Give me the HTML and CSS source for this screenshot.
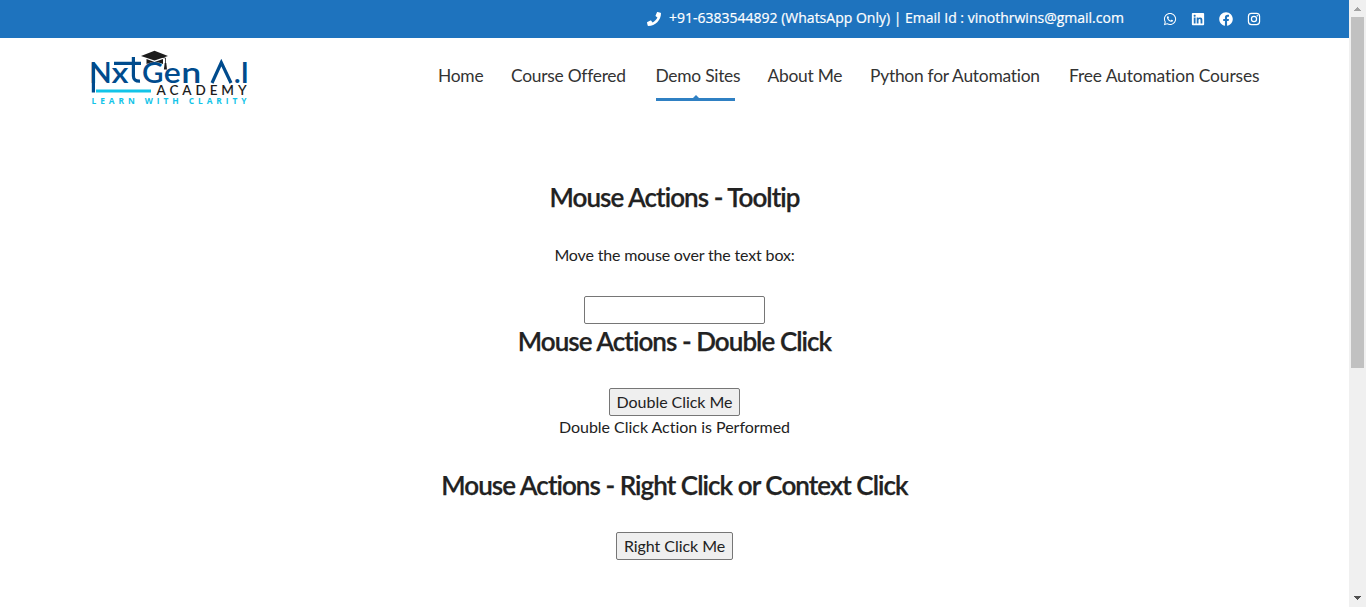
FILE: index.html
```html
<!DOCTYPE html>
<html lang="en">
<head>
<meta charset="utf-8">
<title>Mouse Actions - NxtGen A.I Academy</title>
<link rel="stylesheet" href="styles.css">
</head>
<body>
<div class="page">
  <div class="site">
    <div class="topbar">
      <svg class="phone" viewBox="0 0 512 512"><path d="M493.4 24.6l-104-24c-11.3-2.6-22.9 3.3-27.5 13.9l-48 112c-4.2 9.8-1.4 21.3 6.9 28l60.6 49.6c-36 76.7-98.9 140.5-177.2 177.2l-49.6-60.6c-6.8-8.3-18.2-11.1-28-6.9l-112 48C3.9 366.5-2 378.1.6 389.4l24 104C27.1 504.2 36.7 512 48 512c256.1 0 464-207.5 464-464 0-11.2-7.7-20.9-18.6-23.4z"/></svg>
      <span class="contact">+91-6383544892 (WhatsApp Only) | Email Id : vinothrwins@gmail.com</span>
      <div class="social">
        <svg viewBox="-32 0 512 512"><path d="M380.9 97.1C339 55.1 283.2 32 223.9 32c-122.4 0-222 99.6-222 222 0 39.1 10.2 77.3 29.6 111L0 480l117.7-30.9c32.4 17.7 68.9 27 106.1 27h.1c122.3 0 224.1-99.6 224.1-222 0-59.3-25.2-115-67.1-157zm-157 341.6c-33.2 0-65.7-8.9-94-25.7l-6.7-4-69.8 18.3L72 359.2l-4.4-7c-18.5-29.4-28.2-63.3-28.2-98.2 0-101.7 82.8-184.5 184.6-184.5 49.3 0 95.6 19.2 130.4 54.1 34.8 34.9 56.2 81.2 56.1 130.5 0 101.8-84.9 184.6-186.6 184.6zm101.2-138.2c-5.5-2.8-32.8-16.2-37.9-18-5.1-1.9-8.8-2.8-12.5 2.8-3.7 5.6-14.3 18-17.6 21.8-3.2 3.7-6.5 4.2-12 1.4-32.6-16.3-54-29.1-75.5-66-5.7-9.8 5.7-9.1 16.3-30.3 1.8-3.7.9-6.9-.5-9.7-1.4-2.8-12.5-30.1-17.1-41.2-4.5-10.8-9.1-9.3-12.5-9.5-3.2-.2-6.9-.2-10.6-.2-3.7 0-9.7 1.4-14.8 6.9-5.1 5.6-19.4 19-19.4 46.3 0 27.3 19.9 53.7 22.6 57.4 2.8 3.7 39.1 59.7 94.8 83.8 35.2 15.2 49 16.5 66.6 13.9 10.7-1.6 32.8-13.4 37.4-26.4 4.6-13 4.6-24.1 3.2-26.4-1.3-2.5-5-3.9-10.5-6.6z"/></svg>
        <svg viewBox="-32 0 512 512"><path d="M416 32H31.9C14.3 32 0 46.5 0 64.3v383.4C0 465.5 14.3 480 31.9 480H416c17.6 0 32-14.5 32-32.3V64.3c0-17.8-14.4-32.3-32-32.3zM135.4 416H69V202.2h66.5V416zm-33.2-243c-21.3 0-38.5-17.3-38.5-38.5S80.9 96 102.2 96c21.2 0 38.5 17.3 38.5 38.5 0 21.3-17.2 38.5-38.5 38.5zm282.1 243h-66.4V312c0-24.8-.5-56.7-34.5-56.7-34.6 0-39.9 27-39.9 54.9V416h-66.4V202.2h63.7v29.2h.9c8.9-16.8 30.6-34.5 62.9-34.5 67.2 0 79.7 44.3 79.7 101.9V416z"/></svg>
        <svg viewBox="0 0 512 512"><path d="M504 256C504 119 393 8 256 8S8 119 8 256c0 123.78 90.69 226.38 209.25 245V327.69h-63V256h63v-54.64c0-62.15 37-96.48 93.67-96.48 27.14 0 55.52 4.84 55.52 4.84v61h-31.28c-30.8 0-40.41 19.12-40.41 38.73V256h68.78l-11 71.69h-57.78V501C413.31 482.38 504 379.78 504 256z"/></svg>
        <svg viewBox="-32 0 512 512"><rect class="line" x="20" y="52" width="408" height="408" rx="112"/><circle class="line" cx="224" cy="256" r="94"/><circle cx="343" cy="137" r="27"/></svg>
      </div>
    </div>
    <header class="header">
      <svg class="logo" viewBox="0 0 160 60">
        <g class="logo-main">
          <text y="37.7" x="-0.8" textLength="22.5" lengthAdjust="spacingAndGlyphs">N</text><text y="37.7" x="21.5" textLength="17" lengthAdjust="spacingAndGlyphs">x</text><text y="37.7" x="52" textLength="21.5" lengthAdjust="spacingAndGlyphs">G</text><text y="37.7" x="73.8" textLength="17" lengthAdjust="spacingAndGlyphs">e</text><text y="37.7" x="91.2" textLength="20" lengthAdjust="spacingAndGlyphs">n</text><text y="37.7" x="143.8">.</text><text y="37.7" x="150.4">I</text>
        </g>
        <path class="logo-stroke" d="M3.4 17.5V47.5M24 18.4H51M43.4 12V31Q43.4 36.5 50 36.2M122 38L131.3 17.6L141 38"/>
        <path class="logo-rule" d="M6 46H61"/>
        <path class="logo-cap" d="M51 11L64.5 5.7L78 11L64.5 15.5ZM56.5 14L64.5 17L73 14V19Q64.5 15 56.5 19Z"/>
        <path class="logo-tassel" d="M64.5 11L75.5 13V19"/>
        <path class="logo-cap" d="M74.7 18L73.9 24.5H77L76.3 18Z"/>
        <text class="logo-academy" x="66.5" y="50" textLength="90">ACADEMY</text>
        <text class="logo-tagline" x="1.5" y="58.8" textLength="155">LEARN WITH CLARITY</text>
      </svg>
      <nav class="nav">
        <a>Home</a><a>Course Offered</a><a class="active">Demo Sites</a><a>About Me</a><a>Python for Automation</a><a class="last">Free Automation Courses</a>
      </nav>
    </header>
    <main class="content">
      <h2>Mouse Actions - Tooltip</h2>
      <p class="prompt">Move the mouse over the text box:</p>
      <input class="field" type="text">
      <h2>Mouse Actions - Double Click</h2>
      <button class="btn double">Double Click Me</button>
      <p class="result">Double Click Action is Performed</p>
      <h2>Mouse Actions - Right Click or Context Click</h2>
      <button class="btn right">Right Click Me</button>
    </main>
  </div>
  <div class="scrollbar">
    <svg class="arrow" viewBox="0 0 17 17"><path fill="#a3a3a3" d="M8 7h1v1h1v1h1v1h1v1H5v-1h1V9h1V8h1z"/></svg>
    <div class="thumb"></div>
    <svg class="arrow down" viewBox="0 0 17 17"><path fill="#505050" d="M5 6h7v1h-1v1h-1v1H9v1H8V9H7V8H6V7H5z"/></svg>
  </div>
</div>
</body>
</html>
```
FILE: styles.css
```css
* { box-sizing: border-box; }
body { margin: 0; background: #fff; color: #222; font: 16px/24px Lato, sans-serif; overflow: hidden; }
.page { display: flex; height: 607px; }
.site { width: 1349px; }
.topbar { height: 38px; background: #1e73be; display: flex; align-items: center; justify-content: flex-end; padding: 0 88.5px 2px 0; color: #fff; fill: #fff; }
.phone { width: 14px; height: 14px; margin: 2px 8px 0 0; }
.contact { font: 14px/20px "Open Sans", sans-serif; width: 455px; white-space: nowrap; -webkit-text-stroke: .2px #fff; }
.social { display: flex; gap: 14px; margin: 1px 0 0 38.5px; }
.social svg { width: 14px; height: 14px; }
.line { fill: none; stroke: #fff; stroke-width: 44; }
.header { display: flex; justify-content: space-between; padding: 7px 90px 0; height: 122px; }
.logo { width: 160px; height: 60px; }
.logo-main { font: 600 29.5px Lato, sans-serif; fill: #004b8d; }
.logo-stroke { fill: none; stroke: #004b8d; stroke-width: 3.2; }
.logo-rule { stroke: #12c4e8; stroke-width: 3; }
.logo-cap { fill: #1c1c1c; }
.logo-tassel { fill: none; stroke: #1c1c1c; stroke-width: .8; }
.logo-academy { font: 600 13.5px Lato, sans-serif; fill: #1c1c1c; }
.logo-tagline { font: 700 8.4px "Open Sans", sans-serif; fill: #12c4e8; }
.nav { display: grid; grid-template-columns: 73px 144.5px 112px 102.5px 199px 190px; font-size: 17.4px; line-height: 24px; padding-top: 19px; color: #333; white-space: nowrap; font-variant-ligatures: none; letter-spacing: -.25px; }
.last { letter-spacing: -.13px; }
.active { position: relative; height: 37px; }
.active::after { content: ""; position: absolute; left: 0; bottom: 0; width: 79px; height: 3px; background: #2f80c3; }
.active::before { content: ""; position: absolute; left: 37px; bottom: 3px; border: solid transparent; border-width: 0 3px 3px; border-bottom-color: #2f80c3; }
.content { display: flex; flex-direction: column; align-items: center; padding-top: 19px; }
h2 { margin: 0; font-size: 26px; line-height: 36px; font-weight: 600; letter-spacing: -.94px; -webkit-text-stroke: .25px #222; }
p { margin: 0; }
.prompt { margin: 28px 0 29px; letter-spacing: -.16px; }
.field { width: 181px; height: 28px; border: 1px solid #767676; border-radius: 2px; margin-bottom: -1px; }
.btn { font: 16px/24px Lato, sans-serif; color: #222; height: 28px; padding: 1px 6px; border: 1px solid #767676; border-radius: 2px; background: #efefef; font-variant-ligatures: none; letter-spacing: -.05px; }
.double { margin-top: 29px; width: 131px; }
.result { margin: -1px 0 28px; letter-spacing: -.03px; }
.right { margin-top: 29px; width: 117px; }
.scrollbar { width: 17px; background: #f0f0f0; display: flex; flex-direction: column; align-items: center; }
.arrow { width: 17px; height: 17px; flex: none; display: block; }
.thumb { width: 13px; height: 351px; background: #c1c1c1; }
.down { margin-top: auto; }
```
